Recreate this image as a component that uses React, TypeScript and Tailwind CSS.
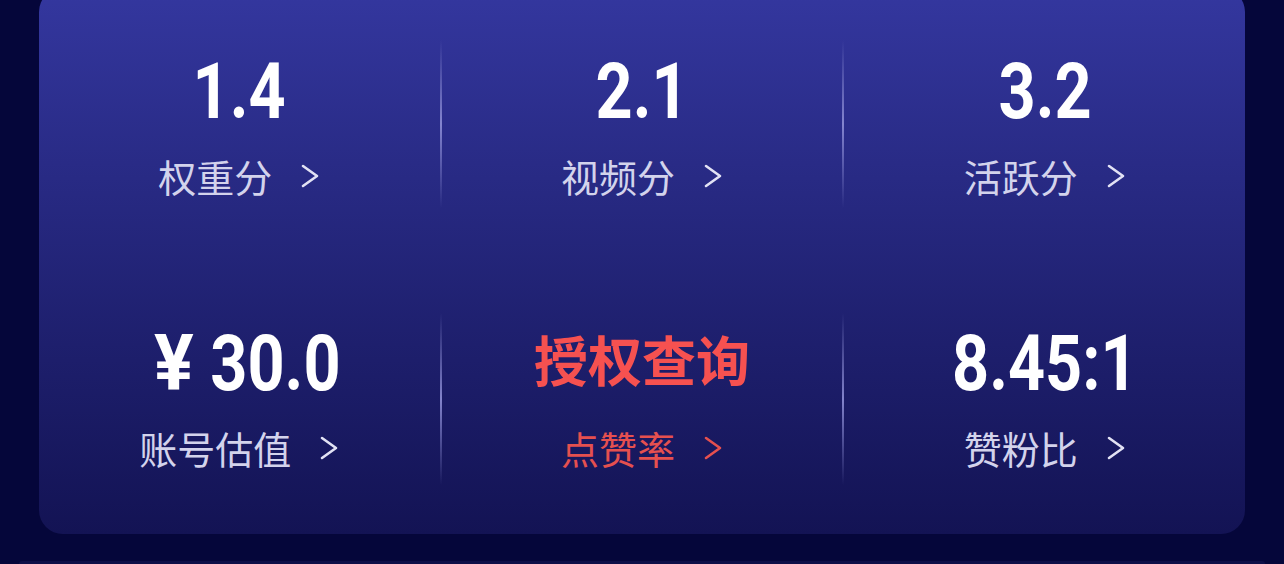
import React from "react";

const numFont = { fontFamily: 'Roboto, "Liberation Sans", sans-serif' };
const cjkFont = { fontFamily: '"Noto Sans CJK SC", "Noto Sans", sans-serif' };

function Chevron({ color }: { color: string }) {
  return (
    <svg width="20" height="28" viewBox="0 0 20 28" fill="none" className="shrink-0">
      <polyline points="3,4 17,14 3,24" stroke={color} strokeWidth="2.6" strokeLinecap="round" strokeLinejoin="round" />
    </svg>
  );
}

function Cell({
  value,
  label,
  red,
  bigCjk,
  prefix,
}: {
  value: string;
  label: string;
  red?: boolean;
  bigCjk?: boolean;
  prefix?: string;
}) {
  return (
    <div className="flex-1 flex flex-col items-center">
      {bigCjk ? (
        <div className="h-[78px] pb-[10px] flex items-center text-[54px] font-bold leading-none text-[#f65150]" style={cjkFont}>
          {value}
        </div>
      ) : (
        <div className={`h-[78px] flex justify-center items-start ${prefix ? "pl-[28px]" : ""}`}>
          {prefix && (
            <span className="inline-block scale-x-[0.95] text-[78px] font-bold leading-[78px] text-white mr-[2px]" style={numFont}>
              {prefix}
            </span>
          )}
          <span className="inline-block scale-x-[0.83] text-[78px] font-bold leading-[78px] text-white whitespace-nowrap" style={numFont}>
            {value}
          </span>
        </div>
      )}
      <div className="mt-[26px] flex items-center gap-[28px]">
        <span
          className={`text-[38px] leading-[38px] ${red ? "text-[#e5504f]" : "text-[#d3d3ec]"}`}
          style={cjkFont}
        >
          {label}
        </span>
        <Chevron color={red ? "#e5504f" : "#e2e2f4"} />
      </div>
    </div>
  );
}

function Divider() {
  return <div className="w-[2px] self-stretch bg-gradient-to-b from-transparent via-[#8e8fd6] to-transparent opacity-90" />;
}

export default function App() {
  return (
    <div className="w-[1284px] h-[564px] bg-[#05063a] overflow-hidden flex flex-col">
      <div className="mx-[39px] -mt-[12px] h-[546px] rounded-[24px] bg-gradient-to-b from-[#34379f] to-[#131354] pt-[52px] pb-[49px] flex flex-col">
        <div className="h-[168px] flex">
          <div className="flex-1 flex pt-[13px]">
            <Cell value="1.4" label="权重分" />
          </div>
          <Divider />
          <div className="flex-1 flex pt-[13px]">
            <Cell value="2.1" label="视频分" />
          </div>
          <Divider />
          <div className="flex-1 flex pt-[13px]">
            <Cell value="3.2" label="活跃分" />
          </div>
        </div>
        <div className="h-[172px] mt-[105px] flex">
          <div className="flex-1 flex pt-[12px]">
            <Cell prefix="¥" value="30.0" label="账号估值" />
          </div>
          <Divider />
          <div className="flex-1 flex pt-[12px]">
            <Cell value="授权查询" label="点赞率" red bigCjk />
          </div>
          <Divider />
          <div className="flex-1 flex pt-[12px]">
            <Cell value="8.45:1" label="赞粉比" />
          </div>
        </div>
      </div>
      <div className="mx-[19px] mt-[27px] h-[40px] rounded-t-[20px] bg-[#0e0f48]" />
    </div>
  );
}
